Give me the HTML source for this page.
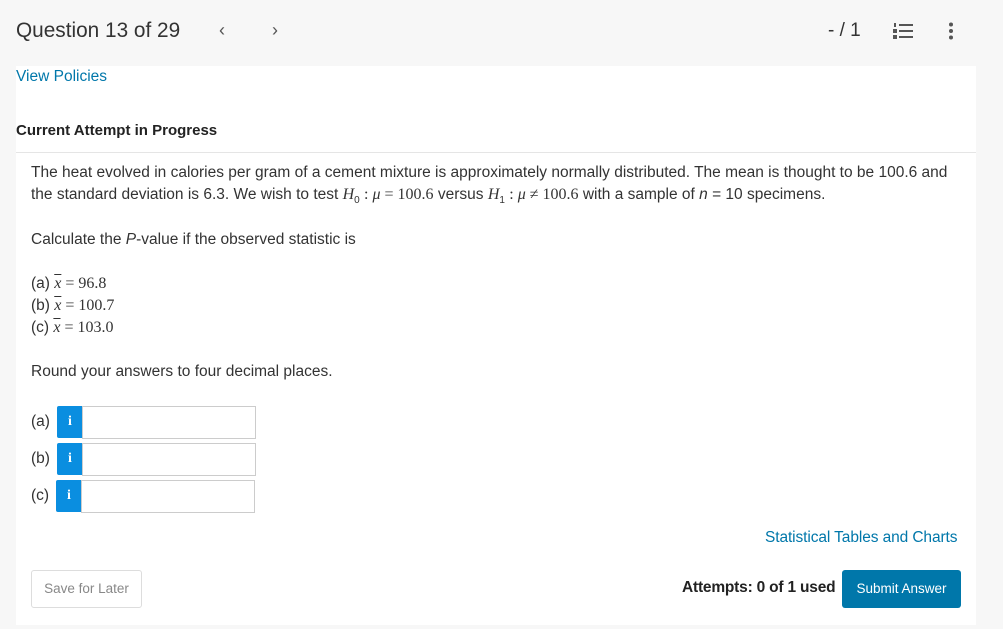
<!DOCTYPE html>
<html><head><meta charset="utf-8"><style>
*{margin:0;padding:0;box-sizing:border-box}
body{width:1003px;height:629px;background:#f7f7f7;font-family:"Liberation Sans",sans-serif;color:#333;position:relative;overflow:hidden}
.a{position:absolute;white-space:nowrap}
.panel{position:absolute;left:16px;top:66px;width:960px;height:559px;background:#fff}
.m{font-family:"Liberation Serif",serif;font-size:16px}
.t{font-size:15.5px;color:#333}
.info{position:absolute;width:26px;height:32px;background:#0a8ee0;border-radius:2px 0 0 2px;color:#fff;font-family:"Liberation Serif",serif;font-weight:bold;font-size:14px;text-align:center;line-height:32px}
.inp{position:absolute;height:33px;border:1px solid #ccc;background:#fff}
</style></head><body>
<div class="a" style="left:16px;top:19px;font-size:20.8px;color:#333">Question 13 of 29</div>
<div class="a" style="left:219px;top:20px;font-size:18px;color:#555">&lsaquo;</div>
<div class="a" style="left:272px;top:20px;font-size:18px;color:#555">&rsaquo;</div>
<div class="a" style="left:828px;top:20px;font-size:19px;color:#333">- / 1</div>
<svg class="a" style="left:893px;top:22px" width="20" height="18"><g fill="#555"><rect x="6" y="2" width="14" height="2"/><rect x="6" y="8" width="14" height="2"/><rect x="6" y="14" width="14" height="2"/><rect x="1" y="1" width="2" height="4"/><rect x="0" y="7" width="4" height="4"/><rect x="0" y="13" width="4" height="4"/></g></svg>
<svg class="a" style="left:948px;top:22px" width="6" height="18"><g fill="#555"><circle cx="3" cy="2.5" r="2"/><circle cx="3" cy="9" r="2"/><circle cx="3" cy="15.5" r="2"/></g></svg>
<div class="panel"></div>
<div class="a" style="left:16px;top:68px;font-size:15.5px;color:#0077aa">View Policies</div>
<div class="a" style="left:16px;top:122px;font-size:15px;font-weight:bold;color:#222">Current Attempt in Progress</div>
<div class="a" style="left:16px;top:152px;width:960px;height:1px;background:#e5e5e5"></div>
<div class="a t" style="left:31px;top:164px">The heat evolved in calories per gram of a cement mixture is approximately normally distributed. The mean is thought to be 100.6 and</div>
<div class="a t" style="left:31px;top:186px">the standard deviation is 6.3. We wish to test <i class="m">H</i><sub style="font-size:10px">0</sub> <span class="m">: <i>μ</i> = 100.6</span> versus <i class="m">H</i><sub style="font-size:10px">1</sub> <span class="m">: <i>μ</i> ≠ 100.6</span> with a sample of <i>n</i> = 10 specimens.</div>
<div class="a t" style="left:31px;top:231px">Calculate the <i>P</i>-value if the observed statistic is</div>
<div class="a t" style="left:31px;top:275px">(a) <span class="m"><i style="text-decoration:overline">x</i> = 96.8</span></div>
<div class="a t" style="left:31px;top:297px">(b) <span class="m"><i style="text-decoration:overline">x</i> = 100.7</span></div>
<div class="a t" style="left:31px;top:319px">(c) <span class="m"><i style="text-decoration:overline">x</i> = 103.0</span></div>
<div class="a t" style="left:31px;top:363px">Round your answers to four decimal places.</div>
<div class="a t" style="left:31px;top:413px">(a)</div><div class="info" style="left:57px;top:406px">i</div><div class="inp" style="left:82px;top:406px;width:174px"></div>
<div class="a t" style="left:31px;top:450px">(b)</div><div class="info" style="left:57px;top:443px">i</div><div class="inp" style="left:82px;top:443px;width:174px"></div>
<div class="a t" style="left:31px;top:487px">(c)</div><div class="info" style="left:56px;top:480px">i</div><div class="inp" style="left:81px;top:480px;width:174px"></div>
<div class="a" style="left:765px;top:529px;font-size:15.5px;color:#0077aa;letter-spacing:-0.1px">Statistical Tables and Charts</div>
<div class="a" style="left:31px;top:570px;width:111px;height:38px;border:1px solid #ddd;border-radius:3px;color:#888;font-size:13.5px;text-align:center;line-height:36px">Save for Later</div>
<div class="a" style="left:682px;top:579px;font-size:15.5px;font-weight:bold;color:#222;letter-spacing:-0.2px">Attempts: 0 of 1 used</div>
<div class="a" style="left:842px;top:570px;width:119px;height:38px;background:#0077aa;border-radius:3px;color:#fff;font-size:13.5px;text-align:center;line-height:38px">Submit Answer</div>
</body></html>
